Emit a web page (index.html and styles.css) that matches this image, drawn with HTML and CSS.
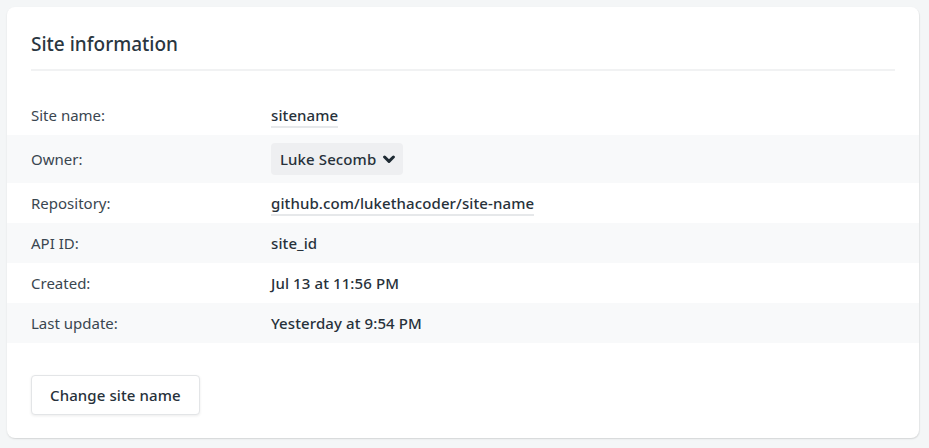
FILE: index.html
```html
<!DOCTYPE html>
<html>
<head>
<meta charset="utf-8">
<link rel="stylesheet" href="styles.css">
</head>
<body>
<div class="card">
  <div class="card-header">
    <h2 class="title">Site information</h2>
  </div>
  <div class="rows">
    <div class="row">
      <div class="label">Site name:</div>
      <div class="value"><span class="link">sitename</span></div>
    </div>
    <div class="row striped owner">
      <div class="label">Owner:</div>
      <div class="value">
        <span class="select">Luke Secomb
          <svg class="chev" width="12" height="9" viewBox="0 0 12 9"><path d="M1.6 2 L6 6.4 L10.4 2" fill="none" stroke="#1e2a33" stroke-width="3" stroke-linecap="round" stroke-linejoin="round"/></svg>
        </span>
      </div>
    </div>
    <div class="row">
      <div class="label">Repository:</div>
      <div class="value"><span class="link">github.com/lukethacoder/site-name</span></div>
    </div>
    <div class="row striped">
      <div class="label">API ID:</div>
      <div class="value">site_id</div>
    </div>
    <div class="row">
      <div class="label">Created:</div>
      <div class="value">Jul 13 at 11:56 PM</div>
    </div>
    <div class="row striped">
      <div class="label">Last update:</div>
      <div class="value">Yesterday at 9:54 PM</div>
    </div>
  </div>
  <div class="actions">
    <button class="btn">Change site name</button>
  </div>
</div>
</body>
</html>
```
FILE: styles.css
```css
* { box-sizing: border-box; }
html, body { margin: 0; padding: 0; }
body {
  background: #f4f6f7;
  font-family: "Noto Sans", "Open Sans", sans-serif;
  color: #2e3a42;
  padding: 7px 10px 10px 7px;
}
.card {
  background: #ffffff;
  border-radius: 8px;
  box-shadow: 0 1px 2px rgba(0,0,0,0.10), 1px 1px 1px rgba(0,0,0,0.04);
  height: 431px;
  width: 912px;
}
.card-header {
  margin: 0 24px;
  height: 64px;
  border-bottom: 2px solid #f1f2f3;
  display: flex;
  align-items: center;
}
.title {
  margin: 0;
  padding-top: 11px;
  font-size: 19px;
  font-weight: 500;
  color: #2a3640;
}
.rows {
  margin-top: 24px;
}
.row {
  display: flex;
  align-items: center;
  height: 40px;
  padding: 0 24px;
  font-size: 15px;
}
.row.owner { height: 48px; }
.striped { background: #f8f9fa; }
.label {
  width: 240px;
  color: #3a4650;
}
.value {
  font-weight: 500;
  color: #27313a;
  letter-spacing: 0.1px;
}
.link {
  border-bottom: 2px solid #e6e8ea;
  padding-bottom: 1px;
}
.select {
  display: inline-flex;
  align-items: center;
  gap: 7px;
  background: #eeeff1;
  border-radius: 4px;
  height: 32px;
  padding: 0 8px 0 9px;
}
.chev { margin-top: 1px; }
.actions {
  padding: 32px 24px 0;
}
.btn {
  font-family: inherit;
  font-size: 15px;
  font-weight: 500;
  letter-spacing: 0.1px;
  color: #27313a;
  background: #fff;
  border: 1px solid #e3e5e7;
  border-radius: 4px;
  box-shadow: 0 1px 3px rgba(0,0,0,0.08);
  height: 40px;
  padding: 0 18px;
  cursor: pointer;
}
```
